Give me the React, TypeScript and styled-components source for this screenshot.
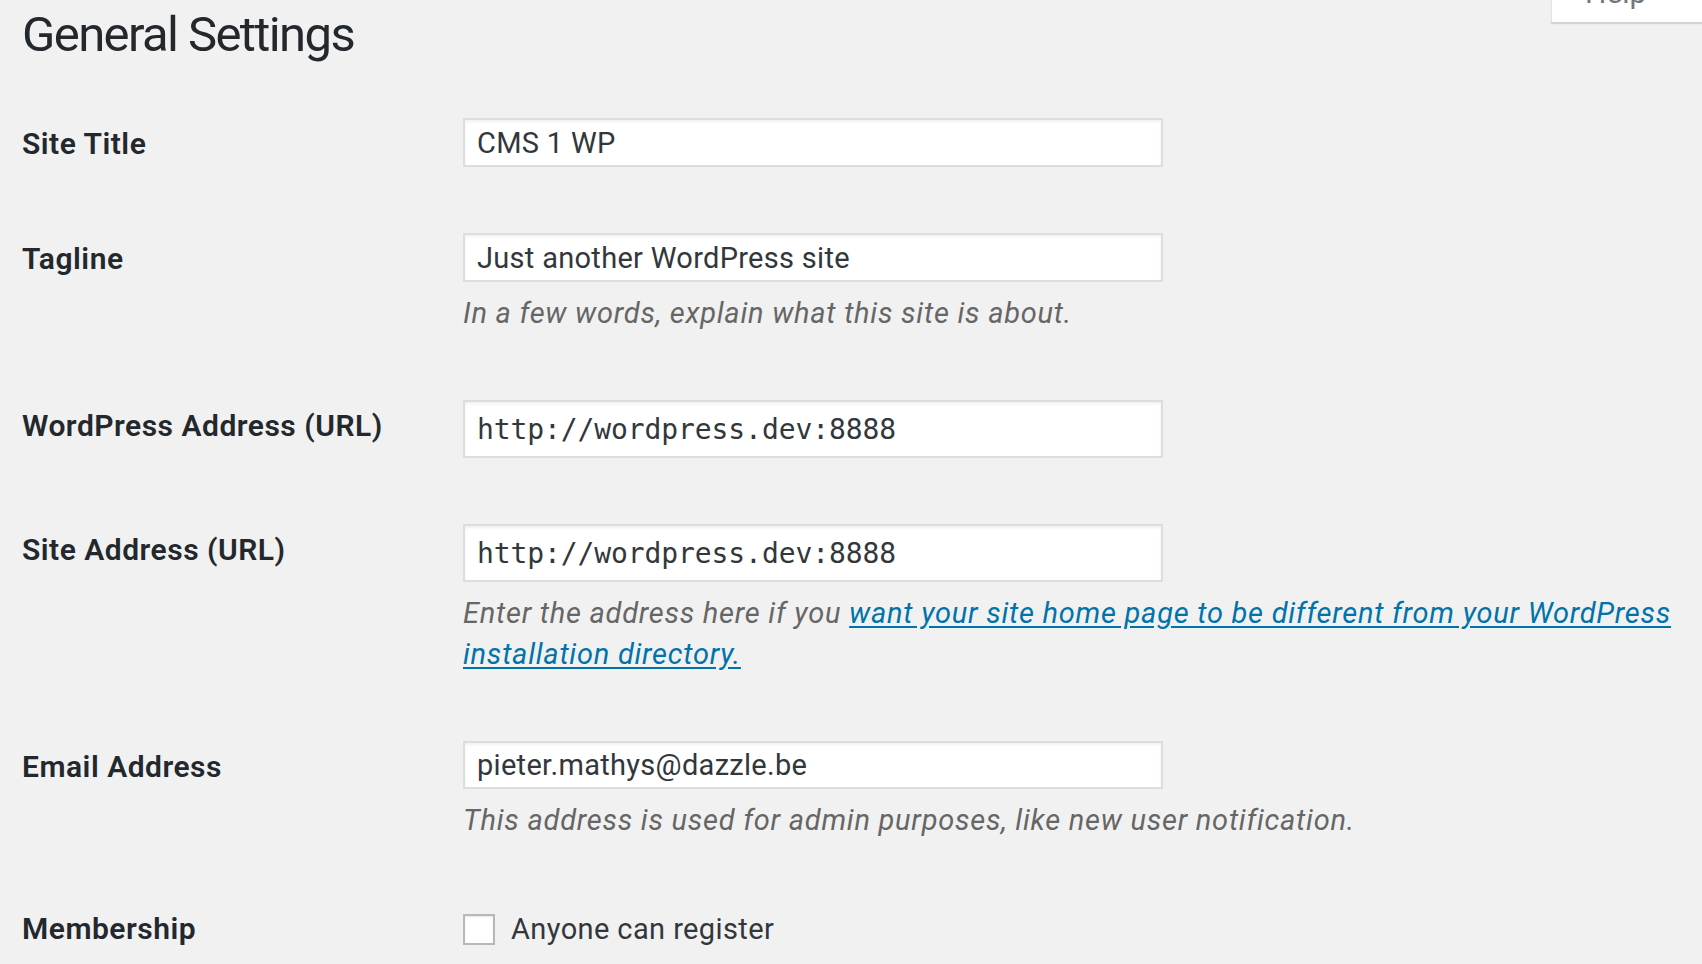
import React from "react";
import styled, { createGlobalStyle } from "styled-components";

const GlobalStyle = createGlobalStyle`
  html, body {
    margin: 0;
    padding: 0;
    background: #f1f1f1;
  }
  body {
    font-family: Roboto, "Noto Sans", Arial, sans-serif;
    color: #23282d;
  }
`;

const Page = styled.div`
  position: relative;
  height: 964px;
  padding: 0 6px 0 22px;
  overflow: hidden;
  box-sizing: border-box;
`;

const HelpTab = styled.div`
  position: absolute;
  top: 0;
  left: 1551px;
  right: 0;
  height: 22px;
  background: #fff;
  border-left: 1px solid #e2e4e7;
  box-shadow: 0 2px 1px rgba(0, 0, 0, 0.12);
  overflow: hidden;
`;

const HelpText = styled.span`
  display: block;
  margin: -22px 0 0 33px;
  font-size: 30px;
  line-height: 30px;
  color: #72777c;
`;

const Title = styled.h1`
  margin: 0;
  padding-top: 5px;
  font-size: 49px;
  font-weight: 400;
  line-height: 60px;
  color: #23282d;
  letter-spacing: -1.6px;
`;

const Form = styled.div`
  display: flex;
  flex-direction: column;
  gap: 66px;
  margin-top: 53px;
`;

const FormRow = styled.div`
  display: flex;
  align-items: flex-start;
`;

const Label = styled.label<{ $top: number }>`
  flex: 0 0 441px;
  padding-top: ${(p) => p.$top}px;
  font-size: 30px;
  font-weight: 600;
  letter-spacing: 0.5px;
  line-height: 36px;
  color: #23282d;
`;

const Field = styled.div`
  flex: 1;
`;

const TextInput = styled.input<{ $mono?: boolean; $height: number }>`
  display: block;
  box-sizing: border-box;
  width: 700px;
  height: ${(p) => p.$height}px;
  margin: 0;
  padding: 0 12px;
  border: 2px solid #dddddd;
  background: #fff;
  box-shadow: inset 0 2px 3px rgba(0, 0, 0, 0.06);
  color: #32373c;
  outline: none;
  font-family: ${(p) =>
    p.$mono
      ? `"DejaVu Sans Mono", "Liberation Mono", monospace`
      : `Roboto, "Noto Sans", Arial, sans-serif`};
  font-size: ${(p) => (p.$mono ? "28px" : "29px")};
  letter-spacing: ${(p) => (p.$mono ? "-0.1px" : "0.3px")};
`;

const Description = styled.p`
  margin: 11px 0 0;
  font-size: 29px;
  font-style: italic;
  letter-spacing: 0.75px;
  line-height: 41px;
  color: #666;
`;

const DocLink = styled.a`
  color: #0073aa;
  text-decoration: underline;
  text-underline-offset: 3px;
`;

const CheckRow = styled.div`
  display: flex;
  align-items: center;
  height: 44px;
`;

const CheckBox = styled.span`
  display: block;
  box-sizing: border-box;
  width: 32px;
  height: 31px;
  border: 2px solid #b4b9be;
  background: #fff;
  box-shadow: inset 0 1px 2px rgba(0, 0, 0, 0.1);
`;

const CheckText = styled.span`
  margin-left: 16px;
  font-size: 29px;
  letter-spacing: 0.4px;
  color: #32373c;
`;

interface Row {
  label: string;
  value?: string;
  mono?: boolean;
  height: number;
  description?: React.ReactNode;
}

const rows: Row[] = [
  { label: "Site Title", value: "CMS 1 WP", height: 49 },
  {
    label: "Tagline",
    value: "Just another WordPress site",
    height: 49,
    description: "In a few words, explain what this site is about.",
  },
  {
    label: "WordPress Address (URL)",
    value: "http://wordpress.dev:8888",
    mono: true,
    height: 58,
  },
  {
    label: "Site Address (URL)",
    value: "http://wordpress.dev:8888",
    mono: true,
    height: 58,
    description: (
      <>
        Enter the address here if you{" "}
        <DocLink href="#">
          want your site home page to be different from your WordPress
          installation directory.
        </DocLink>
      </>
    ),
  },
  {
    label: "Email Address",
    value: "pieter.mathys@dazzle.be",
    height: 48,
    description:
      "This address is used for admin purposes, like new user notification.",
  },
];

const App = () => {
  return (
    <Page>
      <GlobalStyle />
      <HelpTab>
        <HelpText>Help</HelpText>
      </HelpTab>
      <Title>General Settings</Title>
      <Form>
        {rows.map((row) => (
          <FormRow key={row.label}>
            <Label $top={8}>{row.label}</Label>
            <Field>
              <TextInput
                $mono={row.mono}
                $height={row.height}
                defaultValue={row.value}
                readOnly
              />
              {row.description && (
                <Description>{row.description}</Description>
              )}
            </Field>
          </FormRow>
        ))}
        <FormRow>
          <Label $top={4}>Membership</Label>
          <CheckRow>
            <CheckBox />
            <CheckText>Anyone can register</CheckText>
          </CheckRow>
        </FormRow>
      </Form>
    </Page>
  );
};

export default App;
